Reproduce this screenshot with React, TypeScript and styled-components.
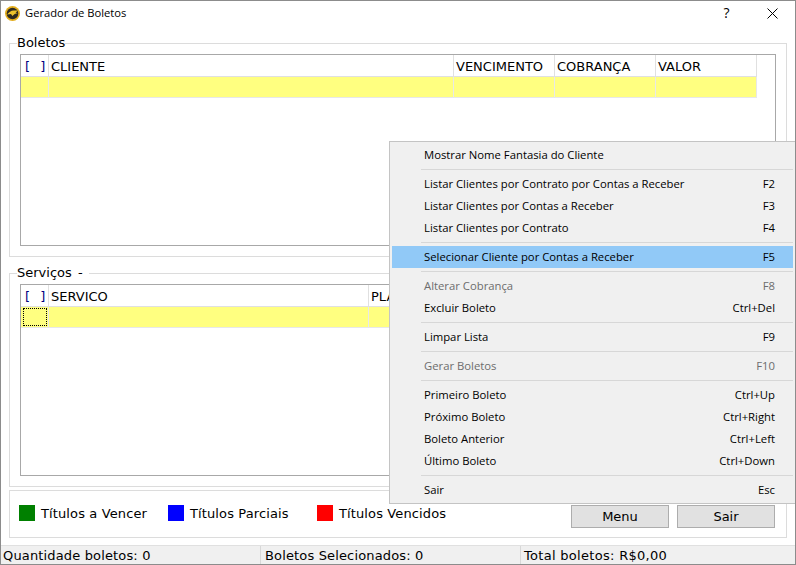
import * as React from "react"
import styled, { createGlobalStyle } from 'styled-components'

const gridColumns = {
  boletos: [
    { label: '[  ]', width: 28, mark: true },
    { label: 'CLIENTE', width: 405 },
    { label: 'VENCIMENTO', width: 101 },
    { label: 'COBRANÇA', width: 101 },
    { label: 'VALOR', width: 101 },
  ],
  servicos: [
    { label: '[  ]', width: 28, mark: true },
    { label: 'SERVICO', width: 320 },
    { label: 'PLANO', width: 388 },
  ],
}

type MenuEntry = { label: string, keys?: string, disabled?: boolean, active?: boolean } | 'sep'

const menuEntries: MenuEntry[] = [
  { label: 'Mostrar Nome Fantasia do Cliente' },
  'sep',
  { label: 'Listar Clientes por Contrato por Contas a Receber', keys: 'F2' },
  { label: 'Listar Clientes por Contas a Receber', keys: 'F3' },
  { label: 'Listar Clientes por Contrato', keys: 'F4' },
  'sep',
  { label: 'Selecionar Cliente por Contas a Receber', keys: 'F5', active: true },
  'sep',
  { label: 'Alterar Cobrança', keys: 'F8', disabled: true },
  { label: 'Excluir Boleto', keys: 'Ctrl+Del' },
  'sep',
  { label: 'Limpar Lista', keys: 'F9' },
  'sep',
  { label: 'Gerar Boletos', keys: 'F10', disabled: true },
  'sep',
  { label: 'Primeiro Boleto', keys: 'Ctrl+Up' },
  { label: 'Próximo Boleto', keys: 'Ctrl+Right' },
  { label: 'Boleto Anterior', keys: 'Ctrl+Left' },
  { label: 'Último Boleto', keys: 'Ctrl+Down' },
  'sep',
  { label: 'Sair', keys: 'Esc' },
]

function DataGrid ({ columns, focused }: { columns: typeof gridColumns.boletos, focused?: boolean }) {
  return (
    <GridFrame>
      <HeaderRow>
        {columns.map(c => (
          <HeaderCell key={c.label} $width={c.width} $mark={c.mark}>{c.label}</HeaderCell>
        ))}
      </HeaderRow>
      <DataRow>
        {columns.map((c, i) => (
          <DataCell key={c.label} $width={c.width}>
            {focused && i === 0 && <FocusMark />}
          </DataCell>
        ))}
      </DataRow>
    </GridFrame>
  )
}

export default function App () {
  return (
    <Window>
      <GlobalStyle />
      <TitleBar>
        <svg width="15" height="15" viewBox="0 0 15 15">
          <circle cx="7.5" cy="7.5" r="7.5" fill="#e3ad1c" />
          <circle cx="7.5" cy="7.5" r="5.8" fill="#2e2a20" />
          <path d="M2 8.5 C4 6 6 4.6 8.5 4.4 L13 4.6 L10.6 6.4 L12.6 7.2 C10.5 7.6 8.8 8.2 7.4 10 L6 8 Z" fill="#ecc22c" />
        </svg>
        <WindowTitle>Gerador de Boletos</WindowTitle>
        <HelpButton>?</HelpButton>
        <CloseButton>
          <svg width="11" height="11" viewBox="0 0 11 11">
            <path d="M0.5 0.5 L10.5 10.5 M10.5 0.5 L0.5 10.5" stroke="#000" strokeWidth="1" fill="none" />
          </svg>
        </CloseButton>
      </TitleBar>
      <Content>
        <GroupBox>
          <GroupTitle>Boletos</GroupTitle>
          <DataGrid columns={gridColumns.boletos} />
        </GroupBox>
        <GroupBox>
          <GroupTitle $trail={6}>Serviços -</GroupTitle>
          <DataGrid columns={gridColumns.servicos} focused />
        </GroupBox>
        <FooterPanel>
          <LegendItem $color="#008000">Títulos a Vencer</LegendItem>
          <LegendItem $color="#0000ff">Títulos Parciais</LegendItem>
          <LegendItem $color="#ff0000">Títulos Vencidos</LegendItem>
          <FooterButtons>
            <PanelButton>Menu</PanelButton>
            <PanelButton>Sair</PanelButton>
          </FooterButtons>
        </FooterPanel>
      </Content>
      <StatusBar>
        <StatusCell>Quantidade boletos: 0</StatusCell>
        <StatusCell>Boletos Selecionados: 0</StatusCell>
        <StatusCell>Total boletos: R$0,00</StatusCell>
      </StatusBar>
      <ContextMenu>
        {menuEntries.map((entry, i) => entry === 'sep'
          ? <MenuSeparator key={i} />
          : (
            <MenuItem key={i} $active={entry.active} $disabled={entry.disabled}>
              <span>{entry.label}</span>
              <span>{entry.keys}</span>
            </MenuItem>
          ))}
      </ContextMenu>
    </Window>
  )
}

const GlobalStyle = createGlobalStyle`
  html, body {
    margin: 0;
    padding: 0;
    background: #fff;
  }
  * {
    box-sizing: border-box;
  }
`

const Window = styled.div`
  position: relative;
  width: 796px;
  height: 565px;
  display: flex;
  flex-direction: column;
  background: #fff;
  border: 1px solid #8c8c8c;
  font-family: "DejaVu Sans", Verdana, sans-serif;
  font-size: 12px;
  color: #000;
  overflow: hidden;
`

const TitleBar = styled.div`
  height: 29px;
  flex: none;
  display: flex;
  align-items: center;
  padding: 0 0 4px 4px;
  font-family: "Open Sans", "Noto Sans", sans-serif;
`

const WindowTitle = styled.div`
  flex: 1;
  margin-left: 5px;
  padding-bottom: 2px;
  font-size: 11.2px;
`

const HelpButton = styled.div`
  width: 46px;
  padding: 0 0 2px 1px;
  text-align: center;
  font-size: 14px;
`

const CloseButton = styled.div`
  width: 46px;
  display: flex;
  justify-content: center;
`

const Content = styled.div`
  flex: 1;
  display: flex;
  flex-direction: column;
  padding: 6px 8px 0;
`

const GroupBox = styled.fieldset`
  margin: 0 0 9px;
  padding: 4px 10px 10px;
  height: 221px;
  min-width: 0;
  border: 1px solid #dcdcdc;
  &:nth-child(2) {
    margin-bottom: 3px;
  }
`

const GroupTitle = styled.legend<{ $trail?: number }>`
  margin-left: -3px;
  padding: 0 ${p => p.$trail || 0}px 0 0;
  font-size: 13px;
  line-height: 14px;
  word-spacing: 2px;
`

const GridFrame = styled.div`
  height: 192px;
  border: 1px solid #a8a8a8;
  background: #fff;
`

const HeaderRow = styled.div`
  display: flex;
  height: 22px;
`

const HeaderCell = styled.div<{ $width: number, $mark?: boolean }>`
  width: ${p => p.$width}px;
  flex: none;
  padding: 1px 0 0 ${p => p.$mark ? 4 : 2}px;
  border-right: 1px solid #e0e0e0;
  border-bottom: 1px solid #e0e0e0;
  line-height: 21px;
  font-size: 13px;
  letter-spacing: ${p => p.$mark ? 0.6 : 0}px;
  white-space: pre;
  color: ${p => p.$mark ? '#000080' : '#000'};
`

const DataRow = styled.div`
  display: flex;
  height: 21px;
`

const DataCell = styled.div<{ $width: number }>`
  width: ${p => p.$width}px;
  flex: none;
  padding: 1px 1px 1px 2px;
  background: #ffff80;
  border-right: 1px solid #e8e8e8;
  border-bottom: 1px solid #e8e8e8;
`

const FocusMark = styled.div`
  height: 100%;
  border: 1px dotted #000;
`

const FooterPanel = styled.div`
  height: 48px;
  display: flex;
  align-items: center;
  padding: 0 11px 2px 9px;
  border: 1px solid #dcdcdc;
`

const LegendItem = styled.div<{ $color: string }>`
  display: flex;
  align-items: center;
  gap: 6px;
  width: 149px;
  font-size: 13px;
  letter-spacing: 0.12px;
  &::before {
    content: '';
    width: 16px;
    height: 16px;
    background: ${p => p.$color};
  }
`

const FooterButtons = styled.div`
  margin-left: auto;
  display: flex;
  gap: 8px;
  margin-top: 7px;
`

const PanelButton = styled.div`
  width: 98px;
  height: 23px;
  display: flex;
  align-items: center;
  justify-content: center;
  background: #e1e1e1;
  border: 1px solid #adadad;
  font-size: 13px;
`

const StatusBar = styled.div`
  height: 19px;
  margin-top: 7px;
  flex: none;
  display: flex;
  background: #f0f0f0;
  border-top: 1px solid #e0e0e0;
`

const StatusCell = styled.div`
  width: 260px;
  padding: 1px 0 0 2px;
  line-height: 18px;
  font-size: 13px;
  letter-spacing: 0.15px;
  border-right: 1px solid #d8d8d8;
  &:nth-child(n + 2) {
    padding-left: 4px;
  }
  &:last-child {
    border-right: none;
    padding-left: 3px;
    letter-spacing: 0.3px;
  }
`

const ContextMenu = styled.div`
  position: absolute;
  left: 388px;
  top: 140px;
  width: 407px;
  height: 363px;
  padding: 2px;
  background: #f0f0f0;
  border: 1px solid #c4c4c4;
  font-family: "Open Sans", "Noto Sans", sans-serif;
  font-size: 11.3px;
`

const MenuItem = styled.div<{ $active?: boolean, $disabled?: boolean }>`
  height: 22px;
  display: flex;
  align-items: center;
  justify-content: space-between;
  padding: 0 18px 2px 32px;
  background: ${p => p.$active ? '#91c9f7' : 'transparent'};
  color: ${p => p.$disabled ? '#6d6d6d' : '#000'};
`

const MenuSeparator = styled.div`
  height: 1px;
  margin: 3px 0 3px 29px;
  background: #d7d7d7;
`
